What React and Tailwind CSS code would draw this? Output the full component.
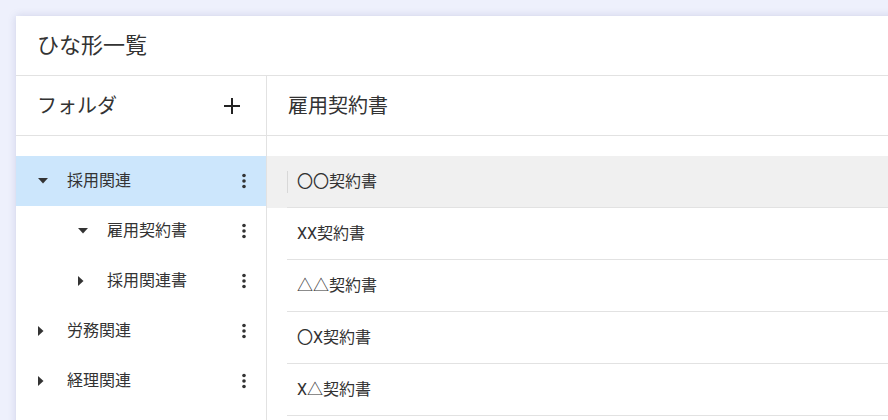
import React from 'react';

const folders = [
  { name: '採用関連', level: 0, open: true, selected: true },
  { name: '雇用契約書', level: 1, open: true },
  { name: '採用関連書', level: 1, open: false },
  { name: '労務関連', level: 0, open: false },
  { name: '経理関連', level: 0, open: false },
];

const docs = ['〇〇契約書', 'XX契約書', '△△契約書', '〇X契約書', 'X△契約書'];

const Caret = ({ open }) =>
  open ? (
    <svg width="10" height="6" viewBox="0 0 10 6" className="text-[#333]">
      <path d="M0 0h10L5 5.5z" fill="currentColor" />
    </svg>
  ) : (
    <svg width="6" height="10" viewBox="0 0 6 10" className="text-[#333]">
      <path d="M0 0v10l5.5-5z" fill="currentColor" />
    </svg>
  );

const Kebab = () => (
  <svg width="4" height="16" viewBox="0 0 4 16" className="text-[#333]">
    <circle cx="2" cy="2.5" r="1.8" fill="currentColor" />
    <circle cx="2" cy="8" r="1.8" fill="currentColor" />
    <circle cx="2" cy="13.5" r="1.8" fill="currentColor" />
  </svg>
);

export default function App() {
  return (
    <div
      className="w-[888px] h-[420px] overflow-hidden bg-[#eef0fc] pl-4 pt-4"
      style={{ fontFamily: 'Roboto, "Noto Sans CJK JP", sans-serif' }}
    >
      <div className="bg-white h-[420px] w-[900px] shadow-[0_0_8px_rgba(60,70,140,0.18)] text-[#333]">
        <div className="h-[60px] flex items-center pl-[21px] border-b border-[#e2e2e2] text-[22px]">
          ひな形一覧
        </div>
        <div className="flex">
          <div className="w-[251px] border-r border-[#e2e2e2] h-[360px] shrink-0">
            <div className="h-[60px] flex items-center justify-between pl-[21px] pr-[25px] border-b border-[#e2e2e2] text-[20px]">
              <span>フォルダ</span>
              <svg width="18" height="18" viewBox="0 0 18 18" className="text-[#222]">
                <path d="M9 1v16M1 9h16" stroke="currentColor" strokeWidth="2" />
              </svg>
            </div>
            <div className="pt-5">
              {folders.map((f) => (
                <div
                  key={f.name}
                  className={`h-[50px] flex items-center pr-5 text-[16px] ${f.selected ? 'bg-[#cce6fc]' : ''} ${f.level ? 'pl-[60px]' : 'pl-[20px]'}`}
                >
                  <span className="w-[31px] flex justify-start pl-[2px]">
                    <Caret open={f.open} />
                  </span>
                  <span className="flex-1">{f.name}</span>
                  <Kebab />
                </div>
              ))}
            </div>
          </div>
          <div className="flex-1">
            <div className="h-[60px] flex items-center pl-[21px] border-b border-[#e2e2e2] text-[20px]">
              雇用契約書
            </div>
            <div className="pt-5">
              {docs.map((d, i) => (
                <div key={d} className={i === 0 ? 'bg-[#f0f0f0] pl-5' : 'pl-5'}>
                  <div className="h-[52px] flex items-center border-b border-[#e2e2e2] text-[16px]">
                    {i === 0 && <span className="w-px h-[22px] bg-[#d8d8d8] mr-[9px]" />}
                    <span className={i === 0 ? '' : 'pl-[10px]'}>{d}</span>
                  </div>
                </div>
              ))}
            </div>
          </div>
        </div>
      </div>
    </div>
  );
}
